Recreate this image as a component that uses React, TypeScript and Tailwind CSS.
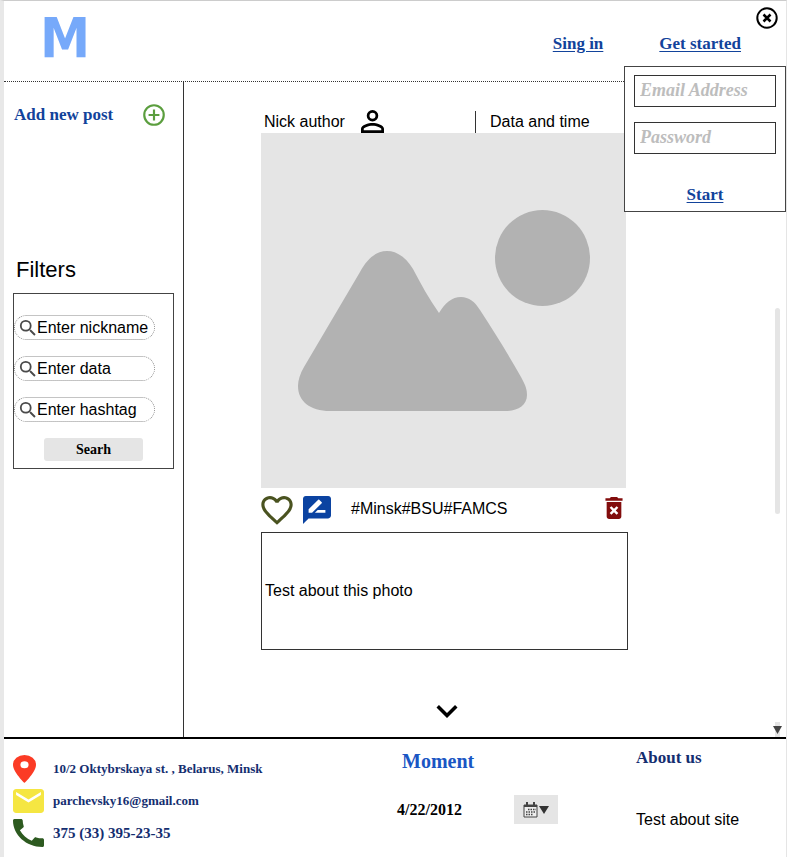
import type { ReactNode } from "react";

const display = "font-['Liberation_Serif',serif] font-bold";

function SearchIcon() {
  return (
    <svg viewBox="2 2 20 20" className="size-[18px] shrink-0 fill-[#4a4a4a]" aria-hidden="true">
      <path d="M15.5 14h-.79l-.28-.27A6.47 6.47 0 0 0 16 9.5 6.5 6.5 0 1 0 9.5 16c1.61 0 3.09-.59 4.23-1.57l.27.28v.79l5 4.99L20.49 19l-4.99-5zm-6 0a4.5 4.5 0 1 1 0-9 4.5 4.5 0 0 1 0 9z" />
    </svg>
  );
}

function FilterField({ id, label }: { id: string; label: string }) {
  return (
    <label
      htmlFor={id}
      className="flex h-[25px] w-[141px] items-center rounded-full border border-dotted border-[#8a8a8a] pl-1"
    >
      <SearchIcon />
      <input
        id={id}
        aria-label={label}
        placeholder={label}
        className="w-full min-w-0 bg-transparent text-base leading-6 text-black outline-none placeholder:text-black placeholder:opacity-100"
      />
    </label>
  );
}

function Contact({ icon, size, children }: { icon: ReactNode; size: string; children: ReactNode }) {
  return (
    <li className={`flex h-8 items-center gap-2 ${size}`}>
      <span className="flex w-8 justify-start">{icon}</span>
      {children}
    </li>
  );
}

function LoginPanel() {
  const field =
    "h-8 w-full border border-[#333] bg-white px-[5px] pb-0.5 text-lg leading-6 italic text-black outline-none placeholder:text-[#bdbdbd] placeholder:opacity-100";
  return (
    <form className="absolute top-[65px] right-0 flex h-[146px] w-[162px] flex-col border border-[#444] bg-white px-[9px] pt-2">
      <input type="email" aria-label="Email Address" placeholder="Email Address" className={`${field} ${display}`} />
      <input type="password" aria-label="Password" placeholder="Password" className={`mt-[15px] ${field} ${display}`} />
      <button type="button" className={`mt-[29px] self-center text-[17px] leading-6 text-[#12439b] underline underline-offset-2 ${display}`}>
        Start
      </button>
    </form>
  );
}

function Header() {
  return (
    <header className="flex h-[81px] items-start border-b border-dotted border-[#333]">
      <div className="mt-1 ml-9 font-['DejaVu_Sans_Condensed','DejaVu_Sans',sans-serif] text-[56px] leading-[66px] font-bold text-[#76a9fa]">M</div>
      <nav className={`mt-[31px] ml-auto flex gap-14 pr-[45px] text-[17px] leading-6 text-[#12439b] ${display}`}>
        <a href="#signin" className="underline underline-offset-2">Sing in</a>
        <a href="#start" className="underline underline-offset-2">Get started</a>
      </nav>
    </header>
  );
}

function Sidebar() {
  return (
    <aside className="flex w-[180px] shrink-0 flex-col border-r border-[#333] pl-[9px]">
      <button type="button" className={`mt-[21px] flex h-6 items-center justify-between pr-4 pl-px text-[#12439b] ${display}`}>
        <span className="text-[17px] leading-6">Add new post</span>
        <svg viewBox="0 0 24 24" className="size-[26px] fill-[#5b9e3e]" aria-hidden="true">
          <path d="M13 7h-2v4H7v2h4v4h2v-4h4v-2h-4V7zm-1-5a10 10 0 1 0 0 20 10 10 0 0 0 0-20zm0 18a8 8 0 1 1 0-16 8 8 0 0 1 0 16z" />
        </svg>
      </button>
      <h2 className="mt-[129px] pl-[3px] text-[22px] leading-7">Filters</h2>
      <form className="mt-[9px] mr-[9px] flex h-[176px] flex-col gap-4 border border-[#444] pt-[21px]">
        <FilterField id="nickname" label="Enter nickname" />
        <FilterField id="data" label="Enter data" />
        <FilterField id="hashtag" label="Enter hashtag" />
        <button type="button" className={`h-[23px] w-[99px] self-center rounded-[3px] bg-[#e5e5e5] text-sm leading-5 ${display}`}>
          Searh
        </button>
      </form>
    </aside>
  );
}

function Post() {
  return (
    <article className="w-[367px]">
      <div className="flex h-[51px] items-end">
        <span className="w-[100px] pl-[3px] text-base leading-[22px]">Nick author</span>
        <svg viewBox="4 4 16 16" className="size-[23px]" aria-hidden="true">
          <path d="M12 5.9a2.1 2.1 0 1 1 0 4.2 2.1 2.1 0 0 1 0-4.2m0 9c2.97 0 6.1 1.46 6.1 2.1v1.1H5.9V17c0-.64 3.13-2.1 6.1-2.1M12 4a4 4 0 1 0 0 8 4 4 0 0 0 0-8zm0 9c-2.67 0-8 1.34-8 4v3h16v-3c0-2.66-5.33-4-8-4z" />
        </svg>
        <span className="ml-auto w-[153px] border-l border-[#333] pl-[14px] text-base leading-[22px]">Data and time</span>
      </div>
      <svg viewBox="0 0 365 355" className="block h-[355px] w-[365px] bg-[#e5e5e5]" role="img" aria-label="Photo">
        <g fill="#b2b2b2">
          <ellipse cx="281.500" cy="125" rx="47.500" ry="48" />
          <path d="M69 278C49 278 37 268 37 253C37 247 39 241 43 234L99 139C106 126 115 118 126 118C137 118 146 126 152 136C160 151 168 166 178 180C184 170 191 164 200 164C208 164 214 169 219 177C234 200 247 221 260 244C265 253 266 257 266 262C266 273 256 278 244 278Z" />
        </g>
      </svg>
      <div className="flex h-11 items-center">
        <button type="button" aria-label="Like">
          <svg viewBox="2 3 20 18.500" className="h-[29px] w-8 fill-[#4a5320]">
            <path d="M16.500 3c-1.740 0-3.410.81-4.500 2.090C10.910 3.810 9.240 3 7.500 3 4.420 3 2 5.420 2 8.500c0 3.780 3.400 6.860 8.550 11.540L12 21.350l1.450-1.320C18.600 15.360 22 12.280 22 8.500 22 5.420 19.580 3 16.500 3zm-4.400 15.550l-.1.1-.1-.1C7.140 14.240 4 11.390 4 8.500 4 6.500 5.500 5 7.500 5c1.540 0 3.040.99 3.570 2.360h1.870C13.460 5.990 14.960 5 16.500 5c2 0 3.500 1.500 3.500 3.500 0 2.890-3.140 5.740-7.900 10.050z" />
          </svg>
        </button>
        <button type="button" aria-label="Comment" className="ml-[10px]">
          <svg viewBox="2 2 20 20" className="size-[28px] fill-[#0b43a1]">
            <path d="M20 2H4c-1.100 0-2 .9-2 2v18l4-4h14c1.100 0 2-.9 2-2V4c0-1.100-.9-2-2-2zM6 14v-2.470l6.880-6.880c.2-.2.510-.2.710 0l1.770 1.770c.2.2.2.510 0 .71L8.470 14H6zm12 0h-7.500l2-2H18v2z" />
          </svg>
        </button>
        <span className="ml-5 pb-0.5 text-base leading-6">#Minsk#BSU#FAMCS</span>
        <button type="button" aria-label="Delete" className="mr-[5px] mb-[5px] ml-auto">
          <svg viewBox="5 3 14 18" className="h-[22px] w-[18px] fill-[#820d0d]">
            <path d="M6 19c0 1.100.9 2 2 2h8c1.100 0 2-.9 2-2V7H6v12zm2.460-7.120l1.410-1.410L12 12.590l2.120-2.120 1.410 1.410L13.410 14l2.120 2.120-1.410 1.410L12 15.410l-2.120 2.120-1.410-1.410L10.590 14l-2.130-2.120zM15.500 4l-1-1h-5l-1 1H5v2h14V4z" />
          </svg>
        </button>
      </div>
      <p className="flex h-[118px] items-center border border-[#333] pl-[3px] text-base leading-6">Test about this photo</p>
    </article>
  );
}

function Footer() {
  return (
    <footer className="flex h-[120px] border-t-2 border-black">
      <ul className={`w-[393px] shrink-0 pt-[14px] pl-[9px] leading-6 text-[#142e70] ${display}`}>
        <Contact
          size="text-[13px]"
          icon={
            <svg viewBox="5 2 14 20" className="h-7 w-[23px] fill-[#fb3b25]" preserveAspectRatio="none" aria-hidden="true">
              <path d="M12 2a7 7 0 0 0-7 7c0 5.250 7 13 7 13s7-7.750 7-13a7 7 0 0 0-7-7zm0 9.500a2.500 2.500 0 1 1 0-5 2.500 2.500 0 0 1 0 5z" />
            </svg>
          }
        >
          10/2 Oktybrskaya st. , Belarus, Minsk
        </Contact>
        <Contact
          size="text-[13px]"
          icon={
            <svg viewBox="2 4 20 16" className="h-6 w-[31px] fill-[#f5e642]" preserveAspectRatio="none" aria-hidden="true">
              <path d="M20 4H4c-1.100 0-2 .9-2 2v12c0 1.100.9 2 2 2h16c1.100 0 2-.9 2-2V6c0-1.100-.9-2-2-2zm0 4l-8 5-8-5V6l8 5 8-5v2z" />
            </svg>
          }
        >
          parchevsky16@gmail.com
        </Contact>
        <Contact
          size="text-[15px]"
          icon={
            <svg viewBox="3 3 18 18" className="h-7 w-[31px] fill-[#2d5a20]" preserveAspectRatio="none" aria-hidden="true">
              <path d="M20.010 15.380c-1.230 0-2.420-.2-3.530-.56-.35-.12-.74-.03-1.010.24l-1.570 1.970c-2.830-1.350-5.480-3.900-6.890-6.830l1.950-1.660c.27-.28.350-.67.240-1.020-.37-1.110-.56-2.300-.56-3.530 0-.54-.45-.99-.99-.99H4.190C3.650 3 3 3.240 3 3.990 3 13.280 10.730 21 20.010 21c.71 0 .99-.63.99-1.180v-3.450c0-.54-.45-.99-.99-.99z" />
            </svg>
          }
        >
          375 (33) 395-23-35
        </Contact>
      </ul>
      <section className="flex w-[239px] shrink-0 flex-col">
        <h2 className={`mt-1 pl-[5px] text-xl leading-9 text-[#1a56c4] ${display}`}>Moment</h2>
        <div className="mt-4 flex items-center justify-between pr-[78px]">
          <time className={`text-base leading-6 ${display}`}>4/22/2012</time>
          <button type="button" aria-label="Choose date" className="flex h-[29px] w-11 items-center justify-center gap-px bg-[#e5e5e5]">
            <svg viewBox="0 0 15 16" className="h-4 w-[15px]" aria-hidden="true">
              <path d="M1 3h13v12H1z" fill="#eee" stroke="#444" />
              <path d="M1 3h13v2H1zM3 0h2v4H3zM10 0h2v4h-2z" fill="#444" />
              <path d="M5 7.500h8M3 10h10M3 12.500h7" stroke="#444" strokeWidth="1.500" strokeDasharray="1.500 1" />
            </svg>
            <svg viewBox="0 0 10 8" className="h-2 w-[10px]" aria-hidden="true">
              <path d="M0 0h10L5 8z" fill="#333" />
            </svg>
          </button>
        </div>
      </section>
      <section className="min-w-0 flex-1">
        <h2 className={`mt-[5px] text-[17px] leading-7 text-[#142e70] ${display}`}>About us</h2>
        <p className="mt-9 text-base leading-6">Test about site</p>
      </section>
    </footer>
  );
}

export default function App() {
  return (
    <div className="relative border-t border-r border-l-4 border-t-[#ccc] border-r-[#e5e5e5] border-l-[#e8e8e8] bg-white font-['Liberation_Sans',sans-serif] text-black">
      <Header />
      <div className="relative flex h-[655px]">
        <Sidebar />
        <main className="flex flex-1 flex-col pl-[77px]">
          <Post />
          <button type="button" aria-label="Next post" className="mt-[54px] ml-[175px] self-start">
            <svg viewBox="6 8 12 8" className="h-[14px] w-[22px]" aria-hidden="true">
              <path d="M16.590 8.590L12 13.170 7.410 8.590 6 10l6 6 6-6z" />
            </svg>
          </button>
        </main>
        <div className="absolute top-[226px] right-[6px] h-[206px] w-[5px] rounded-sm bg-[#e5e5e5]" />
        <div className="absolute right-1 bottom-0 flex h-[15px] w-[9px] items-center justify-center">
          <span className="absolute inset-y-0 w-[5px] bg-[#e5e5e5]" />
          <svg viewBox="0 0 9 8" className="relative h-2 w-[9px]" aria-hidden="true">
            <path d="M0 0h9L4.500 8z" fill="#444" />
          </svg>
        </div>
      </div>
      <Footer />
      <LoginPanel />
      <button type="button" aria-label="Close" className="absolute top-[6px] right-2">
        <svg viewBox="0 0 22 22" className="size-[22px]" fill="none" stroke="#000" aria-hidden="true">
          <circle cx="11" cy="11" r="9.700" strokeWidth="2" />
          <path d="M7.500 7.500l7 7M14.500 7.500l-7 7" strokeWidth="2.500" />
        </svg>
      </button>
    </div>
  );
}
